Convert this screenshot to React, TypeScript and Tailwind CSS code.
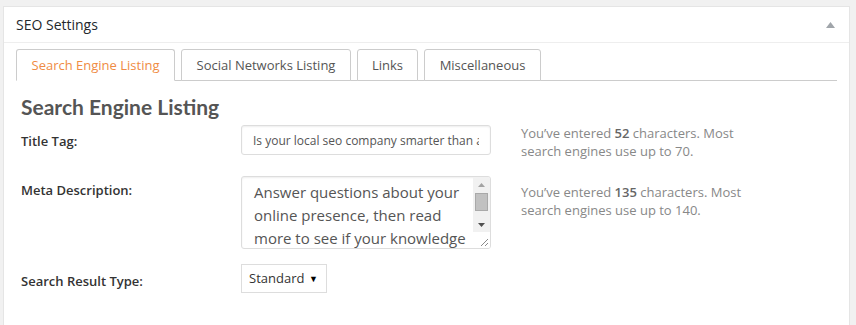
import React, { useState } from 'react';

const tabs = [
  { label: 'Search Engine Listing', w: 'w-[159px]' },
  { label: 'Social Networks Listing', w: 'w-[170px]' },
  { label: 'Links', w: 'w-[61px]' },
  { label: 'Miscellaneous', w: 'w-[117px]' },
];

export default function App() {
  const [active, setActive] = useState(0);
  const [title, setTitle] = useState('Is your local seo company smarter than a 5th grader? Take the quiz');
  const [desc, setDesc] = useState(
    'Answer questions about your online presence, then read more to see if your knowledge stacks up to what a fifth grader knows about local search and SEO for small business.'
  );

  return (
    <div className="min-h-screen bg-[#f1f1f1] pt-[6px] pl-[3px] font-['Open_Sans',sans-serif] text-[13px] text-[#444]">
      <div className="w-[847px] h-[330px] bg-white border border-[#e5e5e5]">
        {/* header */}
        <div className="h-[36px] flex items-center justify-between pl-[12px] pr-[14px] border-b border-[#eeeeee]">
          <h2 className="text-[14px] font-normal text-[#23282d]">SEO Settings</h2>
          <svg width="9" height="6" viewBox="0 0 9 6" className="mt-[1px]">
            <path d="M4.5 0 L9 6 L0 6 Z" fill="#a0a5aa" />
          </svg>
        </div>

        {/* tabs */}
        <div className="mx-[12px] mt-[6px] flex gap-[6px] border-b border-[#cccccc] h-[32px]">
          {tabs.map((t, i) => (
            <button
              key={t.label}
              onClick={() => setActive(i)}
              className={`${t.w} h-[32px] pt-[1px] rounded-t-[3px] border border-[#cccccc] bg-white text-[13px] ${
                i === active ? 'text-[#ef8b44] border-b-white' : 'text-[#555555] border-b-[#cccccc]'
              }`}
            >
              {t.label}
            </button>
          ))}
        </div>

        <div className="pl-[17px] pt-[14px]">
          <h3 className="font-['Lato',sans-serif] text-[21px] font-bold text-[#555555] leading-[24px]">Search Engine Listing</h3>

          {/* title tag */}
          <div className="mt-[6px] h-[30px] flex items-start">
            <label className="w-[220px] font-semibold text-[#333] pt-[7px] leading-[18px]">Title Tag:</label>
            <input
              value={title}
              onChange={e => setTitle(e.target.value)}
              className="h-[30px] w-[250px] border border-[#dddddd] rounded-[3px] px-[11px] text-[12px] text-[#555] outline-none shadow-[inset_0_1px_2px_rgba(0,0,0,0.07)]"
            />
            <p className="ml-[30px] -mt-[1px] w-[250px] text-[#888] leading-[18px]">
              You’ve entered <b className="text-[#666] font-semibold">52</b> characters. Most search engines use up to 70.
            </p>
          </div>

          {/* meta description */}
          <div className="mt-[21px] h-[73px] flex items-start">
            <label className="w-[220px] font-semibold text-[#333] pt-[5px] leading-[18px]">Meta Description:</label>
            <div className="w-[250px] h-[73px] border border-[#dddddd] rounded-[3px] flex overflow-hidden shadow-[inset_0_1px_2px_rgba(0,0,0,0.07)]">
              <textarea
                value={desc}
                onChange={e => setDesc(e.target.value)}
                className="flex-1 h-full resize-none overflow-hidden pl-[12px] pr-[6px] pt-[4px] text-[15px] leading-[23px] text-[#555] outline-none bg-transparent"
              />
              <div className="w-[17px] h-full flex flex-col">
                <div className="flex-1 bg-[#f1f1f1] flex flex-col items-center">
                  <div className="h-[15px] flex items-center justify-center">
                    <svg width="7" height="4" viewBox="0 0 7 4">
                      <path d="M3.5 0 L7 4 L0 4 Z" fill="#a3a3a3" />
                    </svg>
                  </div>
                  <div className="w-[13px] h-[18px] bg-[#c1c1c1] border border-[#a9a9a9] mt-[1px]" />
                  <div className="flex-1" />
                  <div className="h-[15px] flex items-center justify-center">
                    <svg width="7" height="4" viewBox="0 0 7 4">
                      <path d="M0 0 L7 0 L3.5 4 Z" fill="#505050" />
                    </svg>
                  </div>
                </div>
                <div className="h-[16px] bg-white flex items-end justify-end pr-[2px] pb-[2px]">
                  <svg width="7" height="7" viewBox="0 0 7 7">
                    <path d="M7 0 L0 7 M7 4 L4 7" stroke="#8a8a8a" strokeWidth="1" />
                  </svg>
                </div>
              </div>
            </div>
            <p className="ml-[30px] mt-[7px] w-[250px] text-[#888] leading-[18px]">
              You’ve entered <b className="text-[#666] font-semibold">135</b> characters. Most search engines use up to 140.
            </p>
          </div>

          {/* search result type */}
          <div className="mt-[15px] h-[29px] flex items-start">
            <label className="w-[220px] font-semibold text-[#333] pt-[8px] leading-[18px]">Search Result Type:</label>
            <div className="h-[29px] w-[86px] border border-[#dddddd] flex items-center justify-between pl-[7px] pr-[8px] text-[13px] text-[#333]">
              <span>Standard</span>
              <span className="text-[9px] text-black">▼</span>
            </div>
          </div>
        </div>
      </div>
    </div>
  );
}
